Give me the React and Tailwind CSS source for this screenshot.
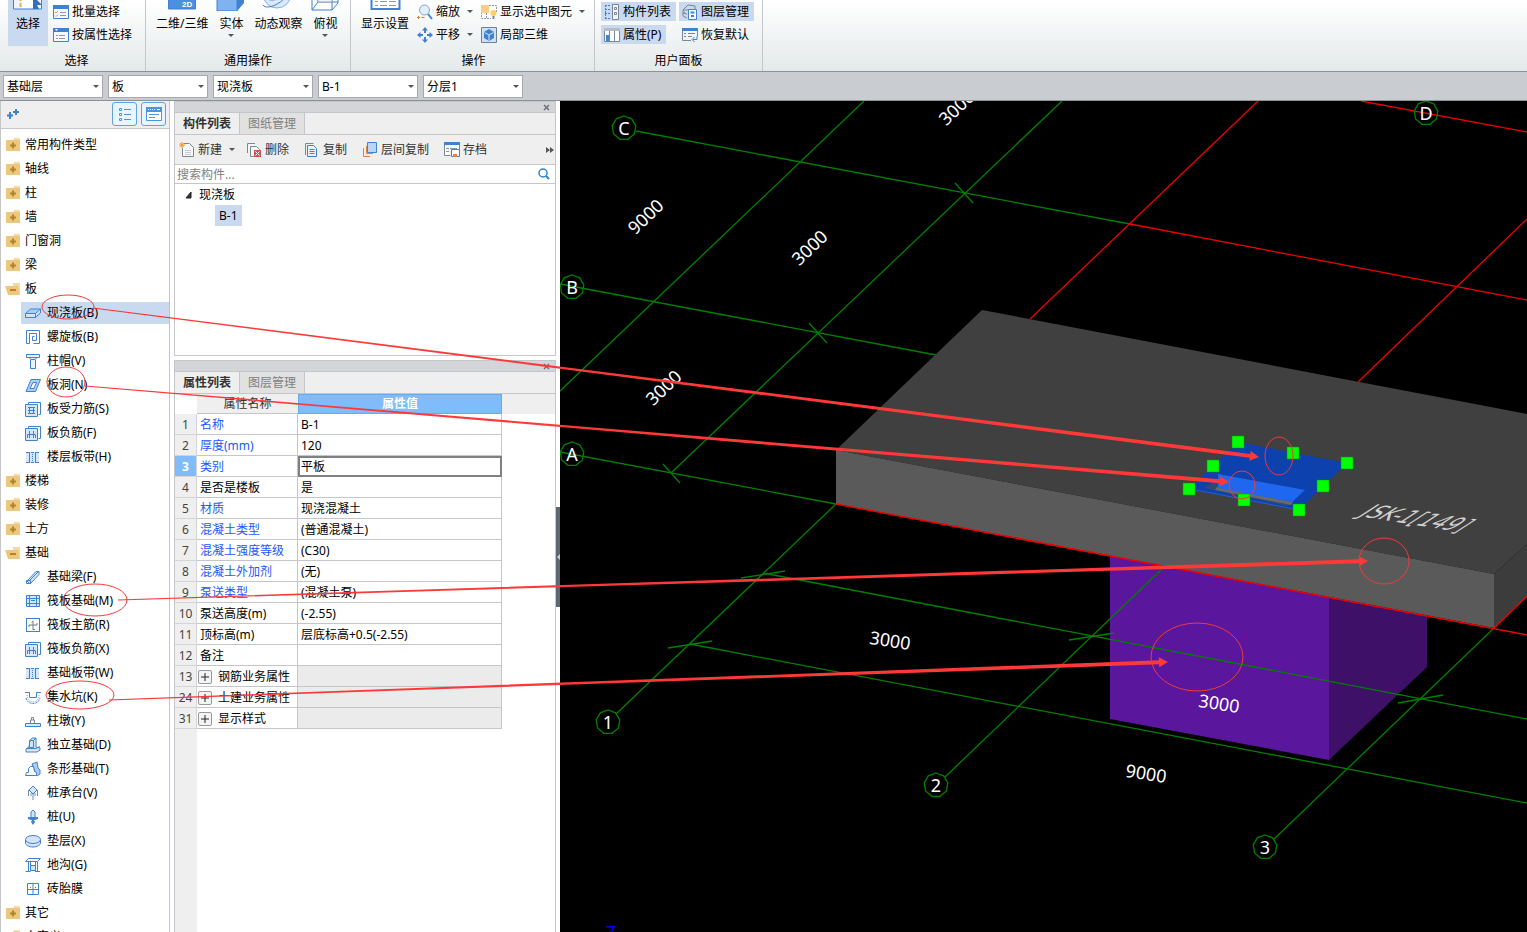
import React from "react";

const B = "#3f82d2";
const L = "#d6e6fa";

/* ---------- small 16px icons ---------- */
const ICONS = {
    slab: <><path d="M1 9l5-5h9l-5 5z" fill="#a9cdf7" /><path d="M1 9h9v3H1zM10 9l5-5v3l-5 5z" fill={L} /><path d="M.5 8.500l5-4.500h10l-5 4.500zv4h10v-4M10.500 12.500l5-4.500V4" fill="none" stroke={B} /></>,
    spiral: <path d="M1.500 14.500v-13h13v13h-6M4.500 14.500v-10h7v7h-4v-4h2M1.500 14.500h3" fill="none" stroke={B} />,
    cap: <path d="M1.500 1.500h13v3h-13zM4 4.500l2 2h4l2-2M5.500 6.500v9h5v-9" fill="#eaf2fc" stroke={B} />,
    hole: <><path d="M1 14.500L6 2.500h9.500l-5 12z" fill="#a9cdf7" stroke={B} /><path d="M5 11.500l3-6h3.500l-2.500 6z" fill="#fff" stroke={B} /></>,
    rebar: <><path d="M3.500 3.500v-2h12v12h-2" fill="none" stroke={B} /><path d="M.5 3.500h12v12H.5z" fill={L} stroke={B} /><path d="M3 6.500h7M3 9.500h7M3 12.500h7M4.500 6v7M8.500 6v7" fill="none" stroke={B} /></>,
    negbar: <><path d="M3.500 3.500v-2h12v12h-2" fill="none" stroke={B} /><path d="M.5 3.500h12v12H.5z" fill={L} stroke={B} /><path d="M4.500 6v7M8.500 6v7M2.500 13V9.500h8V13" fill="none" stroke={B} /></>,
    band: <><path d="M1 3h13v11H1z" fill={L} /><path d="M1 3.500h3M1 13.500h3M6 3.500h3M6 13.500h3M11 3.500h3M11 13.500h3M4.500 3v11M10.500 3v11" stroke={B} /><path d="M7.500 5v8" stroke={B} strokeDasharray="1 1" /></>,
    beam: <><path d="M2 12L11 2.500h3v3L5 15z" fill={L} stroke={B} /><path d="M1.500 11.500h4v3h-4zM5 11l8-8" fill="none" stroke={B} /></>,
    raft: <><path d="M1 2h14v12H1z" fill={L} /><path d="M1.500 2.500h13v11h-13zM4.500 2v12M11.500 2v12M1 5.500h14M1 10.500h14M6 7.500h4" fill="none" stroke={B} /></>,
    mainbar: <><rect x="1.500" y="1.500" width="13" height="13" fill="#fff" stroke={B} /><path d="M8 4v9M4 8h8M6.500 5.500L8 4M4 8v2M12 8V6M8 12.500h2" fill="none" stroke="#6f7f8d" /></>,
    pit: <><path d="M0 3.500h4.500v5h7v-5H16" fill="none" stroke={B} /><path d="M2 6c0 5 3 7 6 7s6-2 6-7" fill="none" stroke="#8c98a5" strokeDasharray="1 1" /><path d="M1 9c1 4 4 5.500 7 5.500s6-1.500 7-5.500" fill="none" stroke={B} strokeDasharray="2 1" /></>,
    pier: <><path d="M5.500 10V7h4v3M6.500 7V4.500h2V7" fill="none" stroke="#7b8794" /><path d="M.5 10.500h15v3H.5z" fill={L} stroke={B} /></>,
    footing: <><path d="M5 3.500L7 1h4v9l4 1v2l-3 2H1v-3l3-2z" fill={L} stroke={B} /><path d="M4.500 3.500h4v7h-4zM1 11.500h10l4-2M8.500 3.500L11 1" fill="none" stroke={B} /></>,
    strip: <><path d="M7 3l5-2 1 6 2 2v4l-3 2z" fill="#a9cdf7" stroke={B} /><path d="M.5 14.500l1-3h2v-4l2-2h3l1 5 2 1v3z" fill="#fff" stroke={B} /></>,
    pilecap: <><path d="M8 1l4 4-4 4-4-4z" fill={L} stroke={B} /><path d="M3.500 5v6M12.500 5v6M8 9v6M6 8v3M10 8v3" stroke="#6f8fb0" /></>,
    pile: <><path d="M6 3l2-2 2 2v6H6z" fill={L} stroke={B} /><path d="M3 8h10v2l-3 1H6l-3-1zM7 11h2l1 2-2 3-2-3z" fill={B} /></>,
    cushion: <><path d="M.5 7v3c0 2 3.500 4 7.500 4s7.500-2 7.500-4V7" fill={L} stroke={B} /><ellipse cx="8" cy="6.500" rx="7.500" ry="4" fill={L} stroke={B} /></>,
    trench: <><path d="M.5 4.500l3-3h12l-3 3zM3.500 5v9M5.500 5v9M10.500 5v9M12.500 5v9M.5 14.500h5M10 14.500h5" fill="none" stroke={B} /><path d="M5.500 8.500h5v5h-5z" fill={L} stroke={B} /></>,
    brick: <><path d="M2.500 2.500h11v11h-11zM8 2.500v11M2.500 8.500h11" fill="none" stroke={B} /><path d="M5 6.500h1M10 6.500h1" stroke={B} /></>,

    batch: <><path d="M.5 1.500h15v13H.5z" fill="#f5f9fe" stroke={B} /><path d="M0 1h16v4H0z" fill={B} /><path d="M2 8l1 1 2-2M2 11.500l1 1 2-2" fill="none" stroke="#e8913a" /><path d="M7 8.500h6M7 11.500h6" stroke="#8c98a5" /></>,
    byprop: <><path d="M.5 1.500h15v13H.5z" fill="#f5f9fe" stroke={B} /><path d="M0 1h16v4H0z" fill={B} /><path d="M2 2l1.500 2L5 2z" fill="#fff" /><path d="M3 8.500h2M6 8.500h6M3 11.500h2M6 11.500h6" stroke="#8c98a5" /></>,
    zoom: <><circle cx="7.500" cy="6" r="5" fill="#e3effc" stroke="#7ea6cf" /><path d="M11 10l4 5" stroke={B} strokeWidth="2" /><path d="M1.500 12v3M0 13.500h3M4.500 13.500h3" stroke="#d9793a" /></>,
    pan: <><path d="M8 0l3 3.500H5zM8 16l3-3.500H5zM0 8l3.500-3v6zM16 8l-3.500-3v6z" fill={B} /><path d="M8 3v3M8 10v3M3 8h3M10 8h3" stroke={B} strokeWidth="2" /></>,
    showsel: <><path d="M5 1.500h10.500V8M.5 8v6.500H10M5.500 9v5" fill="none" stroke="#8c98a5" strokeDasharray="2 1" /><path d="M0 1h8v8H0z" fill="#f9cf85" /><circle cx="12.500" cy="9" r="3" fill="#fbd25e" /><path d="M11.500 12h2v3h-2z" fill="#7a8794" /></>,
    local3d: <><path d="M.5 .5h15v15H.5z" fill="#cfe0f5" stroke="#6f8196" /><path d="M8 2l5 3v6l-5 3-5-3V5z" fill={B} /><path d="M3.500 5.500L8 8l4.500-2.500M8 8v5.500" fill="none" stroke="#d6e6fa" /></>,
    complist: <><path d="M1 1.500h5M1 5.500h5M1 9.500h5M1 14.500h5M1.500 1v14" stroke={B} strokeDasharray="2 1" fill="none" /><path d="M8.500 .5h6v15h-6z" fill="#f0f3f7" stroke="#7b8794" /><path d="M10.500 3.500h2v2h-2zM10.500 8.500h2v2h-2z" fill="none" stroke="#7b8794" /></>,
    layers: <><path d="M1 6l5-5 7 1v4M1 6h5M1 9l4 1M1 12l4 2M1 6v3l2-1M1 9v3" fill="none" stroke="#7b8794" /><path d="M6.500 5.500h8v10h-8z" fill="#fff" stroke={B} /><path d="M8.500 8.500h4M9 12h3" stroke={B} strokeWidth="2" /></>,
    props: <><path d="M.5 1.500h15v13H.5z" fill="#fff" stroke="#7b8794" /><path d="M0 1h16v3H0z" fill="#b4bcc6" /><path d="M5.500 4v11M10.500 4v11" stroke="#7b8794" /><path d="M2 8h3v6H2z" fill={B} /></>,
    restore: <><path d="M.5 13.500v-12h15V9M.5 13.500H9" fill="none" stroke="#7b8794" /><path d="M0 1h16v3H0z" fill={B} /><path d="M2 6.500h2M6 6.500h7M2 9.500h2M6 9.500h4" stroke="#7b8794" /><path d="M15 9v3.500h-4M12.500 10l-2.500 2.500 2.500 2.500" fill="none" stroke={B} /></>,

    add: <><path d="M4.500 1.500h6l4 4v9h-11V6" fill="#f7f8fa" stroke="#7b8794" /><path d="M6 8.500h6M6 10.500h6M6 12.500h6" stroke="#c5cbd3" /><path d="M1 1l4 4M5 1L1 5M3 0v6M0 3h6" stroke="#f09a2c" /></>,
    del: <><path d="M1.500 11V1.500H9M4.500 14.500v-10h6l3 3v7z" fill="#f7f8fa" stroke="#7b8794" /><path d="M8 8h7v7H8z" fill="#d65252" /><path d="M9.500 9.500l4 4M13.500 9.500l-4 4" stroke="#fff" /></>,
    copy: <><path d="M1.500 13V1.500h8" fill="none" stroke="#7b8794" /><path d="M3.500 3.500h6l3 3v8h-9z" fill="#e8f1fc" stroke={B} /><path d="M5.500 7.500h5M5.500 9.500h5M5.500 11.500h5" stroke={B} /></>,
    floorcopy: <><path d="M1.500 6v8.500H8M4.500 4v7.500H11" fill="none" stroke="#e8823a" /><path d="M5.500 .5h9v10h-9z" fill="#b9d6f8" stroke={B} /></>,
    archive: <><path d="M.5 1.500h15v8M.5 1.500v12h6" fill="#fff" stroke="#7b8794" /><path d="M0 0h16v3H0z" fill={B} /><path d="M2 6.500h3M2 9.500h3M6 6.500h7" stroke="#8c98a5" /><path d="M7.500 7.500h8v7h-8z" fill="#fff" stroke={B} /><path d="M9 12h4v3H9z" fill="#e8823a" /></>,
    folder: <><path d="M9 1h5l1 1v1H8z" fill="#f3d9a4" /><path d="M2 3h13v11H2a1 1 0 0 1-1-1V4a1 1 0 0 1 1-1z" fill="#edc77c" /><path d="M8 5.500v6M5 8.500h6" stroke="#b3842a" strokeWidth="2" /></>,
    folderOpen: <><path d="M8 2h7v10H8z" fill="#f3d9a4" /><path d="M0 5h13l2 9H3z" fill="#edc77c" /><path d="M5 9h6" stroke="#b3842a" strokeWidth="2" /></>,
};

const Icon = ({ name }) => (
    <svg className="w-4 h-4 shrink-0" viewBox="0 0 16 16" aria-hidden="true">{ICONS[name]}</svg>
);

const Caret = () => (
    <svg className="w-[6px] h-[3px] shrink-0" viewBox="0 0 6 3" aria-hidden="true"><path d="M0 0h6L3 3z" fill="#555" /></svg>
);

/* ---------- ribbon ---------- */
const BIG_ICONS = {
    select: <><path d="M1.500 1h28v29h-28z" fill="#eef4fb" stroke={B} /><path d="M8.500 0v30" stroke="#e3b341" strokeWidth="2" strokeDasharray="4 2" /><path d="M10 10h11v19H10z" fill="#fff" /><path d="M21 17l9 9h-5l2 4h-6z" fill="#2f6fbd" /></>,
    dim: <><path d="M2.500 1h27v29h-27z" fill="#4b8fe0" stroke={B} /><path d="M5 2h22v18H5z" fill="#cfe3fb" /><text x="16" y="28" fontSize="8" fontWeight="700" fill="#fff" fontFamily="Liberation Sans">2D</text></>,
    solid: <><path d="M2 8h20v24H2z" fill="#7fb2ef" stroke={B} /><path d="M22 8l7-6v22l-7 8z" fill={B} /></>,
    orbit: <><circle cx="15" cy="15" r="14" fill="#d9e8fa" stroke="#7fb2ef" /><path d="M1 26c4 6 22-2 28-16M3 19c6 4 16 2 22-6" fill="none" stroke={B} /></>,
    top: <><path d="M3 8h20v23H3zM23 8l6-6v22l-6 7M9 4v19h20M3 31l6-8" fill="none" stroke={B} /><path d="M9 10h14v13H9z" fill="#eaf2fc" stroke="#9aa7b5" /></>,
    settings: <><path d="M2.500 1h28v29h-28z" fill="#fff" stroke={B} strokeWidth="2" /><path d="M6 22.500h3M11 22.500h7M20 22.500h7M6 26.500h3M11 26.500h7M20 26.500h7" stroke="#8c98a5" /></>,
};

const BigButton = ({ icon, label, caret, active }) => (
    <button type="button" className={`flex flex-col items-center shrink-0 whitespace-nowrap ${active ? "w-10 bg-[#c9d9f0]" : ""}`}>
        <svg className="w-8 h-8" viewBox="0 0 32 32" aria-hidden="true">{BIG_ICONS[icon]}</svg>
        <span className="h-[21px] pt-1 leading-[18px]">{label}</span>
        <span className="flex h-[14px] pt-[2px]">{caret && <Caret />}</span>
    </button>
);

const SmallButton = ({ icon, label, caret, active }) => (
    <button type="button" className={`flex items-center gap-[3px] h-[19px] pl-[3px] pr-[5px] whitespace-nowrap ${active ? "bg-[#c9d9f0]" : ""}`}>
        <Icon name={icon} />
        <span className="leading-[18px]">{label}</span>
        {caret && <span className="pl-1"><Caret /></span>}
    </button>
);

const ButtonStack = ({ children }) => (
    <div className="flex flex-col items-start gap-1 h-[46px] pt-[2px]">{children}</div>
);

const RibbonGroup = ({ title, width, children }) => (
    <section className={`flex flex-col justify-end h-full shrink-0 border-r border-[#c3c7cc] ${width}`}>
        <div className="flex items-end shrink-0">{children}</div>
        <h2 className="h-[25px] pt-[6px] shrink-0 text-center leading-[18px]">{title}</h2>
    </section>
);

const Ribbon = () => (
    <header className="flex h-[72px] shrink-0 overflow-hidden border-b border-[#8b9196] bg-linear-to-b from-white to-[#e4e9ea]">
        <RibbonGroup title="选择" width="w-[146px] pl-2">
            <BigButton icon="select" label="选择" active />
            <div className="pl-[2px]">
                <ButtonStack>
                    <SmallButton icon="batch" label="批量选择" />
                    <SmallButton icon="byprop" label="按属性选择" />
                </ButtonStack>
            </div>
        </RibbonGroup>
        <RibbonGroup title="通用操作" width="w-[205px] px-[10px]">
            <div className="flex gap-[7px]">
                <BigButton icon="dim" label="二维/三维" />
                <BigButton icon="solid" label="实体" caret />
                <BigButton icon="orbit" label="动态观察" />
                <BigButton icon="top" label="俯视" caret />
            </div>
        </RibbonGroup>
        <RibbonGroup title="操作" width="w-[244px] pl-[10px] pr-2">
            <BigButton icon="settings" label="显示设置" />
            <div className="pl-[5px]">
                <ButtonStack>
                    <SmallButton icon="zoom" label="缩放" caret />
                    <SmallButton icon="pan" label="平移" caret />
                </ButtonStack>
            </div>
            <ButtonStack>
                <SmallButton icon="showsel" label="显示选中图元" caret />
                <SmallButton icon="local3d" label="局部三维" />
            </ButtonStack>
        </RibbonGroup>
        <RibbonGroup title="用户面板" width="w-[168px] px-[6px]">
            <ButtonStack>
                <SmallButton icon="complist" label="构件列表" active />
                <SmallButton icon="props" label="属性(P)" active />
            </ButtonStack>
            <div className="pl-[3px]">
                <ButtonStack>
                    <SmallButton icon="layers" label="图层管理" active />
                    <SmallButton icon="restore" label="恢复默认" />
                </ButtonStack>
            </div>
        </RibbonGroup>
    </header>
);

const FILTERS = [
    { label: "楼层", value: "基础层" },
    { label: "类别", value: "板" },
    { label: "类型", value: "现浇板" },
    { label: "构件", value: "B-1" },
    { label: "分层", value: "分层1" },
];

const FilterBar = () => (
    <div className="flex gap-[5px] h-[29px] shrink-0 pl-[3px] pt-[3px] border-b border-[#8b9196] bg-[#c9ccd1]">
        {FILTERS.map((f) => (
            <div key={f.label} className="relative w-[100px] h-[23px]">
                <select aria-label={f.label} defaultValue={f.value} className="w-full h-full appearance-none border border-[#a5a9ae] bg-white pl-[3px] outline-none">
                    <option>{f.value}</option>
                </select>
                <span className="absolute right-1 top-[10px] pointer-events-none"><Caret /></span>
            </div>
        ))}
    </div>
);

/* ---------- component type tree ---------- */
const TREE = [
    { label: "常用构件类型" },
    { label: "轴线" },
    { label: "柱" },
    { label: "墙" },
    { label: "门窗洞" },
    { label: "梁" },
    {
        label: "板",
        children: [
            ["slab", "现浇板(B)"],
            ["spiral", "螺旋板(B)"],
            ["cap", "柱帽(V)"],
            ["hole", "板洞(N)"],
            ["rebar", "板受力筋(S)"],
            ["negbar", "板负筋(F)"],
            ["band", "楼层板带(H)"],
        ],
    },
    { label: "楼梯" },
    { label: "装修" },
    { label: "土方" },
    {
        label: "基础",
        children: [
            ["beam", "基础梁(F)"],
            ["raft", "筏板基础(M)"],
            ["mainbar", "筏板主筋(R)"],
            ["negbar", "筏板负筋(X)"],
            ["band", "基础板带(W)"],
            ["pit", "集水坑(K)"],
            ["pier", "柱墩(Y)"],
            ["footing", "独立基础(D)"],
            ["strip", "条形基础(T)"],
            ["pilecap", "桩承台(V)"],
            ["pile", "桩(U)"],
            ["cushion", "垫层(X)"],
            ["trench", "地沟(G)"],
            ["brick", "砖胎膜"],
        ],
    },
    { label: "其它" },
    { label: "自定义" },
];

const Sidebar = () => (
    <aside className="flex flex-col w-[170px] shrink-0 overflow-hidden border-x border-[#c3c7cc] bg-white">
        <div className="flex items-start h-7 shrink-0 pt-px pl-[5px] pr-[3px] border-b border-[#c3c7cc] bg-[#efefef]">
            <button type="button" aria-label="新增" className="pt-[5px]">
                <svg className="w-[14px] h-[14px]" viewBox="0 0 14 14">
                    <path d="M4 5v7M1 8.500h6M10 2v6M7 5h6" stroke={B} strokeWidth="2" />
                </svg>
            </button>
            <div className="flex gap-1 ml-auto">
                <button type="button" aria-label="列表视图" className="flex items-center justify-center w-[25px] h-6 rounded-[3px] border border-[#5aa2ea] bg-[#e9f4fe]">
                    <svg className="w-4 h-4" viewBox="0 0 16 16">
                        <path d="M2.500 2.500h2v2h-2zM2.500 7.500h2v2h-2zM2.500 12.500h2v2h-2zM7 3.500h7M7 8.500h7M7 13.500h7" fill="none" stroke="#4a94e4" />
                    </svg>
                </button>
                <button type="button" aria-label="窗口视图" className="flex items-center justify-center w-[25px] h-6 rounded-[3px] border border-[#5aa2ea] bg-[#e9f4fe]">
                    <svg className="w-4 h-4" viewBox="0 0 16 16">
                        <path d="M.5 1.500h15v13H.5z" fill="#fff" stroke="#4a94e4" />
                        <path d="M0 1h16v5H0z" fill="#4a94e4" />
                        <path d="M2 3.500h1M4 3.500h1M6 3.500h1M8 3.500h1M11 3.500h3" stroke="#fff" />
                        <path d="M3 8.500h10M3 11.500h6" stroke="#4a94e4" />
                    </svg>
                </button>
            </div>
        </div>
        <ul className="pt-1">
            {TREE.map((group) => (
                <li key={group.label}>
                    <button type="button" className="flex items-center gap-1 w-full h-6 pl-1 text-left">
                        <Icon name={group.children ? "folderOpen" : "folder"} />
                        <span className="leading-[18px]">{group.label}</span>
                    </button>
                    {group.children && (
                        <ul>
                            {group.children.map(([icon, label]) => (
                                <li key={label} className="h-6 pl-5 py-[1px]">
                                    <button type="button" className={`flex items-center gap-[6px] w-full h-[22px] pl-1 text-left ${label === "现浇板(B)" ? "bg-[#c9d9f0]" : ""}`}>
                                        <Icon name={icon} />
                                        <span className="leading-[18px]">{label}</span>
                                    </button>
                                </li>
                            ))}
                        </ul>
                    )}
                </li>
            ))}
        </ul>
    </aside>
);

/* ---------- middle panels ---------- */
const PanelHead = ({ tabs }) => (
    <>
        <div className="flex items-center justify-end h-[11px] shrink-0 pr-[5px] border-b border-[#c3c7cc] bg-[#d3d5d9]">
            <button type="button" aria-label="关闭">
                <svg className="block w-[7px] h-[7px]" viewBox="0 0 7 7"><path d="M1 1l5 5M6 1L1 6" stroke="#6d7278" strokeWidth="1.500" /></svg>
            </button>
        </div>
        <div className="flex h-[22px] shrink-0 border-b border-[#c3c7cc] bg-[#efefef]">
            {tabs.map((tab, i) => (
                <button key={tab} type="button" className={`w-[65px] h-full border-r border-[#c3c7cc] ${i === 0 ? "font-bold text-[#333]" : "bg-[#e1e1e1] text-[#808080]"}`}>
                    {tab}
                </button>
            ))}
        </div>
    </>
);

const ToolButton = ({ icon, label, caret }) => (
    <button type="button" className="flex items-center gap-[3px] whitespace-nowrap text-[#333]">
        <Icon name={icon} />
        <span className="leading-[18px]">{label}</span>
        {caret && <span className="pl-1 -mr-1"><Caret /></span>}
    </button>
);

const ComponentPanel = () => (
    <section className="shrink-0 border border-[#c3c7cc] bg-white">
        <PanelHead tabs={["构件列表", "图纸管理"]} />
        <div className="flex items-center gap-[15px] h-[30px] pl-1 border-b border-[#c3c7cc] bg-[#efefef]">
            <ToolButton icon="add" label="新建" caret />
            <ToolButton icon="del" label="删除" />
            <ToolButton icon="copy" label="复制" />
            <ToolButton icon="floorcopy" label="层间复制" />
            <ToolButton icon="archive" label="存档" />
            <button type="button" aria-label="更多" className="ml-auto pr-px">
                <svg className="w-2 h-[6px]" viewBox="0 0 8 6"><path d="M0 0l4 3-4 3zM4 0l4 3-4 3z" fill="#555" /></svg>
            </button>
        </div>
        <div className="flex items-center h-[19px] pl-[2px] pr-[5px] border-b border-[#c3c7cc]">
            <input type="text" aria-label="搜索构件" placeholder="搜索构件..." className="flex-1 h-full outline-none placeholder:text-[#808080]" />
            <svg className="w-3 h-3" viewBox="0 0 12 12" aria-hidden="true"><circle cx="5" cy="5" r="4" fill="none" stroke="#2b86cb" strokeWidth="1.500" /><path d="M8 8l3 3" stroke="#2b86cb" strokeWidth="2" /></svg>
        </div>
        <div className="h-[171px]">
            <div className="flex items-center gap-[6px] h-[21px] pl-[10px]">
                <svg className="w-2 h-2" viewBox="0 0 8 8" aria-hidden="true"><path d="M6 1v6H1z" fill="#333" stroke="#222" /></svg>
                <span className="leading-[18px]">现浇板</span>
            </div>
            <div className="flex pl-10">
                <button type="button" className="h-[21px] px-1 bg-[#c9d9f0]">B-1</button>
            </div>
        </div>
    </section>
);

const PROPS = [
    { no: 1, name: "名称", value: "B-1", blue: true },
    { no: 2, name: "厚度(mm)", value: "120", blue: true },
    { no: 3, name: "类别", value: "平板", blue: true, current: true },
    { no: 4, name: "是否是楼板", value: "是" },
    { no: 5, name: "材质", value: "现浇混凝土", blue: true },
    { no: 6, name: "混凝土类型", value: "(普通混凝土)", blue: true },
    { no: 7, name: "混凝土强度等级", value: "(C30)", blue: true },
    { no: 8, name: "混凝土外加剂", value: "(无)", blue: true },
    { no: 9, name: "泵送类型", value: "(混凝土泵)", blue: true },
    { no: 10, name: "泵送高度(m)", value: "(-2.55)" },
    { no: 11, name: "顶标高(m)", value: "层底标高+0.5(-2.55)" },
    { no: 12, name: "备注", value: "" },
    { no: 13, name: "钢筋业务属性", group: true },
    { no: 24, name: "土建业务属性", group: true },
    { no: 31, name: "显示样式", group: true },
];

const PropertyPanel = () => (
    <section className="flex flex-col flex-1 min-h-0 border-x border-t border-[#c3c7cc] bg-white">
        <PanelHead tabs={["属性列表", "图层管理"]} />
        <table className="w-full table-fixed border-separate border-spacing-0">
            <colgroup>
                <col className="w-[22px]" />
                <col className="w-[101px]" />
                <col className="w-[204px]" />
                <col />
            </colgroup>
            <thead>
                <tr className="h-5">
                    <td />
                    <th className="p-0 border-b border-[#c3c7cc] bg-[#efefef] font-normal text-[#333] leading-[19px]">属性名称</th>
                    <th className="p-0 border border-[#6aa9ec] bg-[#80bbfb] font-bold text-white leading-[18px]">属性值</th>
                    <td className="bg-[#efefef]" />
                </tr>
            </thead>
            <tbody>
                {PROPS.map((row) => (
                    <tr key={row.no} className="h-[21px]">
                        <th className={`p-0 pt-px border-b border-r border-[#d3d5d9] leading-[19px] ${row.current ? "bg-[#80bbfb] font-bold text-white" : "bg-[#efefef] font-normal text-[#444]"}`}>{row.no}</th>
                        <td className={`p-0 pt-px pl-[3px] border-b border-r border-[#c3c7cc] leading-[19px] whitespace-nowrap ${row.blue ? "text-[#1c58ff]" : ""}`}>
                            {row.group ? (
                                <span className="flex items-center gap-[6px] -ml-[2px]">
                                    <button type="button" aria-label={`展开${row.name}`} className="flex items-center justify-center w-[14px] h-[14px] rounded-[2px] border border-[#999] bg-[#f4f4f4]">
                                        <svg className="w-2 h-2" viewBox="0 0 8 8"><path d="M4 0v8M0 4h8" stroke="#222" /></svg>
                                    </button>
                                    {row.name}
                                </span>
                            ) : row.name}
                        </td>
                        <td className={`p-0 pt-px pl-[3px] border-b border-r border-[#c3c7cc] leading-[19px] ${row.group ? "bg-[#ebebeb]" : ""} ${row.current ? "outline-2 -outline-offset-2 outline-[#808080]" : ""}`}>{row.value}</td>
                        <td />
                    </tr>
                ))}
            </tbody>
        </table>
        <div className="flex-1 w-[22px] bg-[#efefef]" />
    </section>
);

/* ---------- 3D viewport ---------- */
const AXES = [
    [624, 128, "C"],
    [572, 287, "B"],
    [572, 454, "A"],
    [1426, 113, "D"],
    [608, 722, "1"],
    [936, 785, "2"],
    [1265, 847, "3"],
];

const DIMS = [
    [646, 217, -44, "9000"],
    [810, 248, -44, "3000"],
    [664, 388, -44, "3000"],
    [957, 108, -44, "3000"],
    [890, 641, 9, "3000"],
    [1219, 704, 9, "3000"],
    [1146, 774, 9, "9000"],
];

const HANDLES = [[1238, 442], [1293, 453], [1347, 463], [1323, 486], [1299, 510], [1244, 500], [1189, 489], [1213, 466]];

const bubble = (cx, cy) =>
    Array.from({ length: 9 }, (_, i) => {
        const a = (i * Math.PI * 2) / 9 - Math.PI / 2;
        return `${(cx + 12 * Math.cos(a)).toFixed(1)},${(cy + 12 * Math.sin(a)).toFixed(1)}`;
    }).join(" ");

const Viewport = () => (
    <main className="flex-1 min-w-0 bg-black">
        <svg className="block w-full h-full" viewBox="560 101 967 831" preserveAspectRatio="xMinYMin slice" fontFamily="'Noto Sans', 'Noto Sans CJK SC', sans-serif">
            {/* grid behind the model */}
            <g stroke="#008000" fill="none" strokeWidth="1.300">
                <path d="M636 131L1130 224M560 284L936 355M560 452L836 504" />
                <path d="M864 101L560 391M1062 101L671 473" />
                <path d="M955 183l18 20M809 323l18 20M663 464l17 19" />
            </g>
            <g stroke="#f00000" fill="none" strokeWidth="1.300">
                <path d="M1130 224L1527 300M1258 101L1030 319M1527 219L1358 382M1361 101L1527 132" />
            </g>

            {/* sump */}
            <path d="M1110 556l219 41v163l-219-41z" fill="#5a169c" />
            <path d="M1329 597l98 19v51l-98 93z" fill="#3e1068" />

            {/* raft slab */}
            <path d="M982 310l545 104v130l-33 30L836 450z" fill="#404040" />
            <path d="M836 450l658 124v54L836 504z" fill="#5a5a5a" />
            <path d="M1494 574l33-30v53l-33 31z" fill="#3c3c3c" />
            <path d="M836 504L1527 635M1494 628l33-32" stroke="#f00000" fill="none" strokeWidth="1.500" />

            <g stroke="#008000" fill="none" strokeWidth="1.300">
                <path d="M836 504L616 714M1162 569L945 777M1493 629L1274 839" />
                <path d="M763 573L1527 719M690 644L1527 803" />
                <path d="M741 578l44-7M668 648l44-7M1069 640l45-7M1398 703l45-8" />
            </g>

            {/* slab with opening */}
            <path d="M1238 442l109 21-48 47-110-21z" fill="#0d41ad" />
            <path d="M1204 488l13-8 80 15-5 9-5 2z" fill="#2e4a7c" />
            <path d="M1217 487l76 15-2 3-76-15z" fill="#6a6a6a" />
            <path d="M1218 474l87 16-13 12-74-14z" fill="#2067f0" />
            <path d="M1196 490l98 19" stroke="#1f5fe0" />
            {HANDLES.map(([x, y]) => (
                <rect key={`${x}-${y}`} x={x - 6} y={y - 6} width="12" height="12" fill="#00ff00" stroke="#0a8f0a" strokeWidth="0.500" />
            ))}

            {AXES.map(([x, y, name]) => (
                <g key={name}>
                    <polygon points={bubble(x, y)} fill="none" stroke="#008000" strokeWidth="1.300" />
                    <text x={x} y={y + 7} fontSize="18" fill="#fff" textAnchor="middle">{name}</text>
                </g>
            ))}
            {DIMS.map(([x, y, angle, text]) => (
                <text key={`${x}-${y}`} transform={`translate(${x} ${y}) rotate(${angle})`} y="6" fontSize="18" fill="#fff" textAnchor="middle">{text}</text>
            ))}
            <text transform="translate(1416 519) rotate(9) skewX(-48)" y="6" fontSize="20" fill="#d0d0d0" textAnchor="middle" fontFamily="'DejaVu Sans', sans-serif">JSK-1[149]</text>
            <text x="611" y="939" fontSize="18" fill="#0000ff" textAnchor="middle">Z</text>
        </svg>
    </main>
);

/* ---------- red markup drawn over the whole window ---------- */
const ARROWS = [
    [93, 308, 1259, 457],
    [85, 386, 1229, 482],
    [118, 600, 1368, 561],
    [109, 700, 1168, 662],
];

const RINGS = [
    [68, 307, 26, 12],
    [66, 382, 19, 15],
    [95, 600, 32, 16],
    [80, 695, 34, 14],
    [1279, 456, 14, 19],
    [1242, 485, 13, 14],
    [1384, 561, 25, 23],
    [1197, 657, 46, 34],
];

const Markup = () => (
    <svg className="absolute inset-0 w-full h-full pointer-events-none" viewBox="0 0 1527 932" preserveAspectRatio="xMinYMin slice" aria-hidden="true">
        {ARROWS.map(([x1, y1, x2, y2]) => {
            const len = Math.hypot(x2 - x1, y2 - y1);
            const angle = (Math.atan2(y2 - y1, x2 - x1) * 180) / Math.PI;
            return (
                <path
                    key={y1}
                    transform={`translate(${x1} ${y1}) rotate(${angle})`}
                    d={`M0 -0.500L${len - 9} -2V-5L${len} 0L${len - 9} 5V2L0 0.500z`}
                    fill="#ff3838"
                />
            );
        })}
        {RINGS.map(([cx, cy, rx, ry]) => (
            <ellipse key={`${cx}-${cy}`} cx={cx} cy={cy} rx={rx} ry={ry} fill="none" stroke="#f03a3a" />
        ))}
    </svg>
);

export default function App() {
    return (
        <div className="relative flex flex-col h-screen overflow-hidden bg-white text-xs text-black font-['Noto_Sans','Noto_Sans_CJK_SC',sans-serif]">
            <Ribbon />
            <FilterBar />
            <div className="flex flex-1 min-h-0">
                <Sidebar />
                <div className="flex flex-col gap-1 w-[382px] shrink-0 ml-1">
                    <ComponentPanel />
                    <PropertyPanel />
                </div>
                <div className="flex flex-col justify-center w-1 shrink-0 pt-20">
                    <button type="button" aria-label="折叠面板" className="flex items-center h-[100px] bg-[#5c6872]">
                        <svg className="w-1 h-[6px]" viewBox="0 0 4 6"><path d="M4 0v6L1 3z" fill="#c9ccd1" /></svg>
                    </button>
                </div>
                <Viewport />
            </div>
            <Markup />
        </div>
    );
}
